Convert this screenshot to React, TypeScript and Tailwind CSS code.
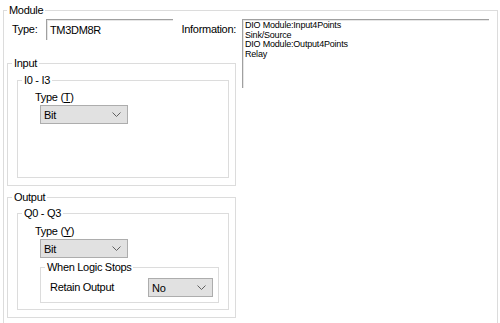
import React from "react";

function Chevron() {
  return (
    <svg width="9" height="5" viewBox="0 0 9 5" className="shrink-0">
      <path d="M0.5 0.5 L4.5 4.5 L8.5 0.5" stroke="#606060" strokeWidth="1" fill="none" />
    </svg>
  );
}

function Combo({ value, className }: { value: string; className: string }) {
  return (
    <div
      className={`flex items-center justify-between h-[19px] border border-[#adadad] bg-[#e1e1e1] pl-[3px] pr-[6px] ${className}`}
    >
      <span className="leading-[14px]">{value}</span>
      <Chevron />
    </div>
  );
}

const legend = "ml-[4px] px-[2px] leading-[14px]";
const group = "border border-[#dcdcdc]";

export default function App() {
  return (
    <div className="w-[500px] h-[323px] overflow-hidden bg-white pt-[3px] pl-[3px] text-[11px] tracking-[-0.3px] text-black font-['Liberation_Sans',Arial,sans-serif]">
      <fieldset className={`w-[495px] pb-[40px] ${group}`}>
        <legend className="ml-[3px] px-[2px] leading-[14px]">Module</legend>
        <div className="flex ml-[3px]">
          <div className="w-[229px] flex flex-col">
            <div className="mt-[2px] h-[21px] flex items-center">
              <span className="ml-[5px] w-[34px]">Type:</span>
              <div className="w-[127px] h-[21px] border-t border-l border-[#a0a0a0] shadow-[inset_1px_1px_0_#e6e6e6] pl-[3px] flex items-center">
                TM3DM8R
              </div>
              <span className="ml-[9px]">Information:</span>
            </div>

            <fieldset className={`mt-[16px] w-[229px] pb-[7px] ${group}`}>
              <legend className={legend}>Input</legend>
              <fieldset className={`ml-[9px] mt-[3px] w-[212px] pb-[53px] ${group}`}>
                <legend className={legend}>I0 - I3</legend>
                <div className="mt-[3px] ml-[17px] leading-[14px]">
                  Type (<span className="underline">T</span>)
                </div>
                <Combo value="Bit" className="mt-[1px] ml-[22px] w-[88px]" />
              </fieldset>
            </fieldset>

            <fieldset className={`mt-[4px] w-[229px] pb-[7px] ${group}`}>
              <legend className={legend}>Output</legend>
              <fieldset className={`ml-[9px] mt-[2px] w-[212px] pb-[6px] ${group}`}>
                <legend className={legend}>Q0 - Q3</legend>
                <div className="mt-[4px] ml-[17px] leading-[14px]">
                  Type (<span className="underline">Y</span>)
                </div>
                <Combo value="Bit" className="mt-[1px] ml-[22px] w-[88px]" />
                <fieldset className={`ml-[22px] mt-[2px] w-[179px] pb-[5px] ${group}`}>
                  <legend className={legend}>When Logic Stops</legend>
                  <div className="mt-[4px] h-[19px] flex items-center">
                    <span className="ml-[9px] w-[98px]">Retain Output</span>
                    <Combo value="No" className="w-[65px]" />
                  </div>
                </fieldset>
              </fieldset>
            </fieldset>
          </div>

          <div className="ml-[6px] mt-[2px] w-[247px] h-[69px] border-t border-l border-[#a0a0a0] shadow-[inset_1px_1px_0_#e6e6e6] pl-[2px] pt-[1px] text-[9px] leading-[9.6px] tracking-[-0.2px]">
            <div>DIO Module:Input4Points</div>
            <div>Sink/Source</div>
            <div>DIO Module:Output4Points</div>
            <div>Relay</div>
          </div>
        </div>
      </fieldset>
    </div>
  );
}
